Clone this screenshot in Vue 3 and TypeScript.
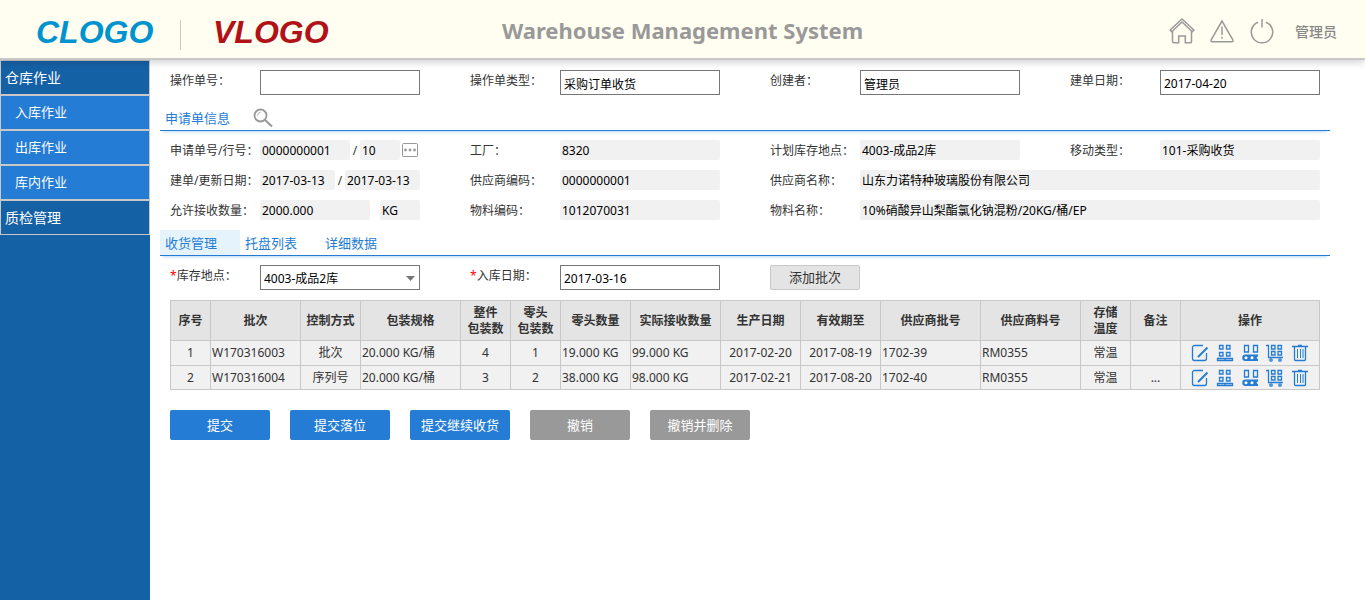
<script setup lang="ts">
import { ref } from 'vue'

interface MenuItem { label: string; child: boolean }
interface Part { value: string; width: number; sep?: string }
interface InfoField { id: string; label: string; wide?: boolean; parts: Part[]; more?: boolean }
interface Column { title: string[]; width: number; left?: boolean }

const menu: MenuItem[] = [
  { label: '仓库作业', child: false },
  { label: '入库作业', child: true },
  { label: '出库作业', child: true },
  { label: '库内作业', child: true },
  { label: '质检管理', child: false },
]

const order = ref([
  { id: 'order-no', label: '操作单号：', value: '' },
  { id: 'order-type', label: '操作单类型：', value: '采购订单收货' },
  { id: 'creator', label: '创建者：', value: '管理员' },
  { id: 'created', label: '建单日期：', value: '2017-04-20' },
])

const info: InfoField[] = [
  { id: 'req', label: '申请单号/行号：', parts: [{ value: '0000000001', width: 90, sep: '/' }, { value: '10', width: 40 }], more: true },
  { id: 'plant', label: '工厂：', parts: [{ value: '8320', width: 160 }] },
  { id: 'loc', label: '计划库存地点：', parts: [{ value: '4003-成品2库', width: 160 }] },
  { id: 'move', label: '移动类型：', parts: [{ value: '101-采购收货', width: 160 }] },
  { id: 'dates', label: '建单/更新日期：', parts: [{ value: '2017-03-13', width: 75, sep: '/' }, { value: '2017-03-13', width: 75 }] },
  { id: 'vendor', label: '供应商编码：', parts: [{ value: '0000000001', width: 160 }] },
  { id: 'vendor-name', label: '供应商名称：', wide: true, parts: [{ value: '山东力诺特种玻璃股份有限公司', width: 460 }] },
  { id: 'qty', label: '允许接收数量：', parts: [{ value: '2000.000', width: 110, sep: ' ' }, { value: 'KG', width: 40 }] },
  { id: 'mat', label: '物料编码：', parts: [{ value: '1012070031', width: 160 }] },
  { id: 'mat-name', label: '物料名称：', wide: true, parts: [{ value: '10%硝酸异山梨酯氯化钠混粉/20KG/桶/EP', width: 460 }] },
]

const tabs = ['收货管理', '托盘列表', '详细数据']
const activeTab = ref(0)
const location = ref('4003-成品2库')
const receiptDate = ref('2017-03-16')

const columns: Column[] = [
  { title: ['序号'], width: 40 },
  { title: ['批次'], width: 90, left: true },
  { title: ['控制方式'], width: 60 },
  { title: ['包装规格'], width: 100, left: true },
  { title: ['整件', '包装数'], width: 50 },
  { title: ['零头', '包装数'], width: 50 },
  { title: ['零头数量'], width: 70, left: true },
  { title: ['实际接收数量'], width: 90, left: true },
  { title: ['生产日期'], width: 80 },
  { title: ['有效期至'], width: 80 },
  { title: ['供应商批号'], width: 100, left: true },
  { title: ['供应商料号'], width: 100, left: true },
  { title: ['存储', '温度'], width: 50 },
  { title: ['备注'], width: 50 },
  { title: ['操作'], width: 139 },
]
const totalWidth = columns.reduce((sum, c) => sum + c.width, 0)

const rows: string[][] = [
  ['1', 'W170316003', '批次', '20.000 KG/桶', '4', '1', '19.000 KG', '99.000 KG', '2017-02-20', '2017-08-19', '1702-39', 'RM0355', '常温', ''],
  ['2', 'W170316004', '序列号', '20.000 KG/桶', '3', '2', '38.000 KG', '98.000 KG', '2017-02-21', '2017-08-20', '1702-40', 'RM0355', '常温', '...'],
]

const actions = [
  { label: '提交', muted: false },
  { label: '提交落位', muted: false },
  { label: '提交继续收货', muted: false },
  { label: '撤销', muted: true },
  { label: '撤销并删除', muted: true },
]
</script>

<template>
  <div class="page">
    <header class="header">
      <div class="brand">
        <span class="logo logo-c">CLOGO</span>
        <span class="logo logo-v">VLOGO</span>
      </div>
      <h1 class="title">Warehouse Management System</h1>
      <div class="tools">
        <button class="tool" type="button" aria-label="首页">
          <svg width="26" height="26" viewBox="0 0 26 26">
            <path d="M3.500 13v10.500a1.200 1.200 0 0 0 1.200 1.200h5v-6.600h6.600v6.600h5a1.200 1.200 0 0 0 1.200-1.200V13M1.200 12 13 1l11.800 11-1.500 1.700L13 4 2.700 13.700z" />
          </svg>
        </button>
        <button class="tool" type="button" aria-label="警告">
          <svg width="26" height="26" viewBox="0 0 26 26">
            <path d="M13 3 2.300 21.500q-1 2.200 1 2.200h19.400q2 0 1-2.200zM13 8.500v8.500M13 18.800v2" />
          </svg>
        </button>
        <button class="tool" type="button" aria-label="退出">
          <svg width="26" height="26" viewBox="0 0 26 26">
            <path d="M9 4.200a10.700 10.700 0 1 0 8 0M13 1v8.500" />
          </svg>
        </button>
        <span class="user">管理员</span>
      </div>
    </header>

    <div class="body">
      <nav class="side">
        <a v-for="m in menu" :key="m.label" href="#" class="menu" :class="{ child: m.child }">{{ m.label }}</a>
      </nav>

      <main class="main">
        <div class="grid top">
          <div v-for="f in order" :key="f.id" class="field">
            <label class="label" :for="f.id">{{ f.label }}</label>
            <input :id="f.id" v-model="f.value" class="box" type="text" />
          </div>
        </div>

        <div class="section">
          <h2 class="section-title">申请单信息</h2>
          <button class="search" type="button" aria-label="查询">
            <svg width="20" height="20" viewBox="0 0 20 20">
              <circle cx="7.500" cy="7.500" r="6" fill="none" stroke="#999" stroke-width="1.800" />
              <path d="M4.500 7.500a3.500 3.500 0 0 1 3-3.200" fill="none" stroke="#aaa" />
              <path d="M12 12l7 6.500" stroke="#999" stroke-width="2.200" />
            </svg>
          </button>
        </div>

        <div class="grid info">
          <div v-for="f in info" :key="f.id" class="field" :class="{ wide: f.wide }">
            <label class="label" :for="f.id + '-0'">{{ f.label }}</label>
            <div class="parts">
              <template v-for="(p, i) in f.parts" :key="i">
                <input :id="f.id + '-' + i" class="value" type="text" readonly :value="p.value" :aria-label="i ? f.label : undefined" :style="{ flexGrow: p.width }" />
                <span v-if="p.sep" class="sep">{{ p.sep }}</span>
              </template>
              <button v-if="f.more" class="more" type="button" aria-label="选择">
                <svg width="16" height="14" viewBox="0 0 16 14">
                  <rect x=".5" y=".5" width="15" height="13" rx="1" fill="#fff" stroke="#999" />
                  <g fill="#999">
                    <circle cx="3.500" cy="7" r="1.400" />
                    <circle cx="8" cy="7" r="1.400" />
                    <circle cx="12.500" cy="7" r="1.400" />
                  </g>
                </svg>
              </button>
            </div>
          </div>
        </div>

        <div class="tabs" role="tablist">
          <button v-for="(t, i) in tabs" :key="t" class="tab" :class="{ active: i === activeTab }" type="button" role="tab" :aria-selected="i === activeTab" @click="activeTab = i">{{ t }}</button>
        </div>

        <div class="grid entry">
          <div class="field">
            <label class="label" for="location"><span class="req">*</span>库存地点：</label>
            <div class="select-wrap">
              <select id="location" v-model="location" class="box">
                <option>4003-成品2库</option>
              </select>
              <svg class="caret" width="9" height="5" viewBox="0 0 9 5"><path d="M0 0h9L4.500 5z" fill="#777" /></svg>
            </div>
          </div>
          <div class="field">
            <label class="label" for="receipt"><span class="req">*</span>入库日期：</label>
            <input id="receipt" v-model="receiptDate" class="box" type="text" />
          </div>
          <div class="field">
            <button class="add" type="button">添加批次</button>
          </div>
        </div>

        <table class="table">
          <colgroup>
            <col v-for="(c, i) in columns" :key="i" :style="{ width: (c.width / totalWidth) * 100 + '%' }" />
          </colgroup>
          <thead>
            <tr>
              <th v-for="(c, i) in columns" :key="i" scope="col">
                <div v-for="line in c.title" :key="line">{{ line }}</div>
              </th>
            </tr>
          </thead>
          <tbody>
            <tr v-for="(r, n) in rows" :key="n">
              <td v-for="(v, i) in r" :key="i" :class="{ left: columns[i].left }">{{ v }}</td>
              <td>
                <div class="ops">
                  <button class="op" type="button" aria-label="编辑">
                    <svg width="18" height="18" viewBox="0 0 18 18">
                      <path d="M12 1.500H3.500a2 2 0 0 0-2 2v11a2 2 0 0 0 2 2h10a2 2 0 0 0 2-2V9" />
                      <path d="M7 13 16.500 3.500" stroke-width="2" />
                    </svg>
                  </button>
                  <button class="op" type="button" aria-label="托盘">
                    <svg width="18" height="18" viewBox="0 0 18 18">
                      <path d="M3.500 1.500h3.500v3.500h-3.500zM10.500 1.500h3.500v3.500h-3.500zM3.500 8.500h3.500v3.500h-3.500zM10.500 8.500h3.500v3.500h-3.500zM1.500 14.500h15v2h-15zM9 14.500v2" />
                    </svg>
                  </button>
                  <button class="op" type="button" aria-label="输送线">
                    <svg width="18" height="18" viewBox="0 0 18 18">
                      <path d="M3.500 1.500h4v6.500h-4zM12.500 1.500h4v6.500h-4z" />
                      <path class="solid" d="M4.500 10.500H17V17H4.500a3.200 3.200 0 0 1 0-6.500z" />
                      <g class="hole">
                        <circle cx="5" cy="13.800" r="1.500" />
                        <circle cx="11" cy="13.800" r="1.500" />
                        <path d="M15.500 13.800l1.500-1.500v3z" />
                      </g>
                    </svg>
                  </button>
                  <button class="op" type="button" aria-label="推车">
                    <svg width="18" height="18" viewBox="0 0 18 18">
                      <path d="M0 1.500h2.500v12H17" />
                      <path d="M5.500 1.500h3.500v3.500h-3.500zM12 1.500h3.500v3.500h-3.500zM5.500 7.500h3.500v3.500h-3.500zM12 7.500h3.500v3.500h-3.500z" />
                      <circle cx="5" cy="16" r="1.200" />
                      <circle cx="14" cy="16" r="1.200" />
                    </svg>
                  </button>
                  <button class="op" type="button" aria-label="删除">
                    <svg width="18" height="18" viewBox="0 0 18 18">
                      <path d="M1 2.500h16M7 1.500h4M3.500 3v12.500q0 1 1 1h9q1 0 1-1V3" />
                      <path d="M6.500 5v9M9.500 5v9M12 5v9" stroke-width="1" />
                    </svg>
                  </button>
                </div>
              </td>
            </tr>
          </tbody>
        </table>

        <div class="actions">
          <button v-for="a in actions" :key="a.label" class="action" :class="{ muted: a.muted }" type="button">{{ a.label }}</button>
        </div>
      </main>
    </div>
  </div>
</template>

<style>
body { margin: 0; }
</style>

<style scoped>
.page {
  min-height: 100vh;
  display: flex;
  flex-direction: column;
  background: #fff;
  color: #333;
  font: 12px/20px "Noto Sans", "Noto Sans CJK SC", sans-serif;
}
.page * { box-sizing: border-box; }
button, input, select { font: inherit; color: inherit; margin: 0; padding: 0; border: 0; background: none; }
button { cursor: pointer; }
svg { display: block; }

.header {
  position: relative;
  z-index: 1;
  display: grid;
  grid-template-columns: 1fr auto 1fr;
  align-items: center;
  height: 60px;
  padding: 4px 28px 0;
  background: #fffef0;
  border-bottom: 2px solid #c8c8c8;
  box-shadow: 0 2px 8px rgba(0, 0, 0, 0.2);
}
.brand { display: flex; align-items: center; margin-top: 8px; padding-left: 8px; }
.logo { height: 30px; font: italic bold 32px/24px "Liberation Sans", sans-serif; }
.logo-c { width: 145px; color: #0093d0; border-right: 1px solid #c8c8c8; }
.logo-v { padding-left: 32px; color: #b01218; }
.title { margin: 0; padding-bottom: 2px; font-size: 22px; line-height: 30px; font-weight: 700; color: #999; }
.tools { display: flex; justify-content: flex-end; align-items: center; gap: 14px; }
.tool svg { fill: none; stroke: #999; stroke-width: 1.5; }
.user { margin-left: 6px; padding-top: 2px; font-size: 14px; font-weight: 500; color: #888; }

.body { flex: 1; display: flex; }
.side { width: 150px; flex: none; background: #1561a6; }
.menu {
  display: block;
  height: 35px;
  padding-left: 4px;
  border: 1px solid #c8c8c8;
  background: #1561a6;
  color: #fff;
  font-size: 14px;
  line-height: 33px;
  text-decoration: none;
}
.menu.child { padding-left: 14px; background: #247cd5; font-size: 13px; }

.main { flex: 1; min-width: 0; padding: 10px 35px 20px 10px; }
.grid { display: grid; grid-template-columns: repeat(4, minmax(0, 1fr)); column-gap: 50px; padding: 0 10px; }
.field { display: flex; }
.wide { grid-column: span 2; }
.label { flex: none; width: 90px; height: 20px; padding-top: 1px; white-space: nowrap; }
.req { color: #f00; }
.box {
  flex: 1;
  min-width: 0;
  width: 100%;
  height: 25px;
  padding: 2px 3px 0;
  border: 1px solid #777;
  background: #fff;
  color: #000;
  border-radius: 0;
  appearance: none;
}

.section {
  display: flex;
  align-items: center;
  height: 26px;
  margin-top: 10px;
  padding-left: 5px;
  border-bottom: 1px solid #247cd5;
  box-shadow: 0 4px 3px -3px rgba(36, 124, 213, 0.3);
}
.section-title { width: 88px; margin: 0; font-size: 13px; font-weight: 400; color: #247cd5; }

.info { row-gap: 10px; margin-top: 9px; }
.parts { flex: 1; min-width: 0; display: flex; align-items: center; }
.value {
  flex: 1 1 0;
  min-width: 0;
  width: 0;
  height: 20px;
  padding-top: 1px;
  text-indent: 2px;
  border-radius: 2px;
  background: #f1f1f1;
  color: #000;
}
.sep { width: 10px; height: 20px; padding-top: 1px; text-align: center; }
.more { width: 20px; padding-left: 2px; }

.tabs {
  display: flex;
  height: 26px;
  margin-top: 10px;
  border-bottom: 1px solid #247cd5;
  box-shadow: 0 4px 3px -3px rgba(36, 124, 213, 0.3);
}
.tab { width: 80px; padding-left: 5px; font-size: 13px; text-align: left; color: #247cd5; }
.tab.active { background: #e5f3fc; }

.entry { margin-top: 9px; }
.select-wrap { position: relative; flex: 1; min-width: 0; display: flex; }
.caret { position: absolute; right: 5px; top: 11px; pointer-events: none; }
.add { width: 90px; height: 25px; padding-bottom: 2px; border: 1px solid #c8c8c8; border-radius: 2px; background: #e4e4e4; font-size: 13px; }

.table {
  width: calc(100% - 20px);
  margin: 10px 10px 0;
  table-layout: fixed;
  border-collapse: collapse;
  background: #f1f1f1;
}
th, td { padding: 0; border: 1px solid #c8c8c8; text-align: center; white-space: nowrap; }
th { height: 40px; background: #e4e4e4; line-height: 16px; font-weight: 700; }
td { height: 25px; }
tr:last-child td { height: 24px; }
td.left { padding-left: 1px; text-align: left; }
.ops { display: flex; justify-content: center; gap: 7px; }
.op svg { fill: none; stroke: #247cd5; stroke-width: 1.3; }
.op .solid { fill: #247cd5; stroke: none; }
.op .hole { fill: #fff; stroke: none; }

.actions { display: flex; gap: 20px; margin: 20px 10px 0; }
.action { width: 100px; height: 30px; border-radius: 2px; background: #247cd5; color: #fff; font-size: 13px; }
.action.muted { background: #999; }
</style>
